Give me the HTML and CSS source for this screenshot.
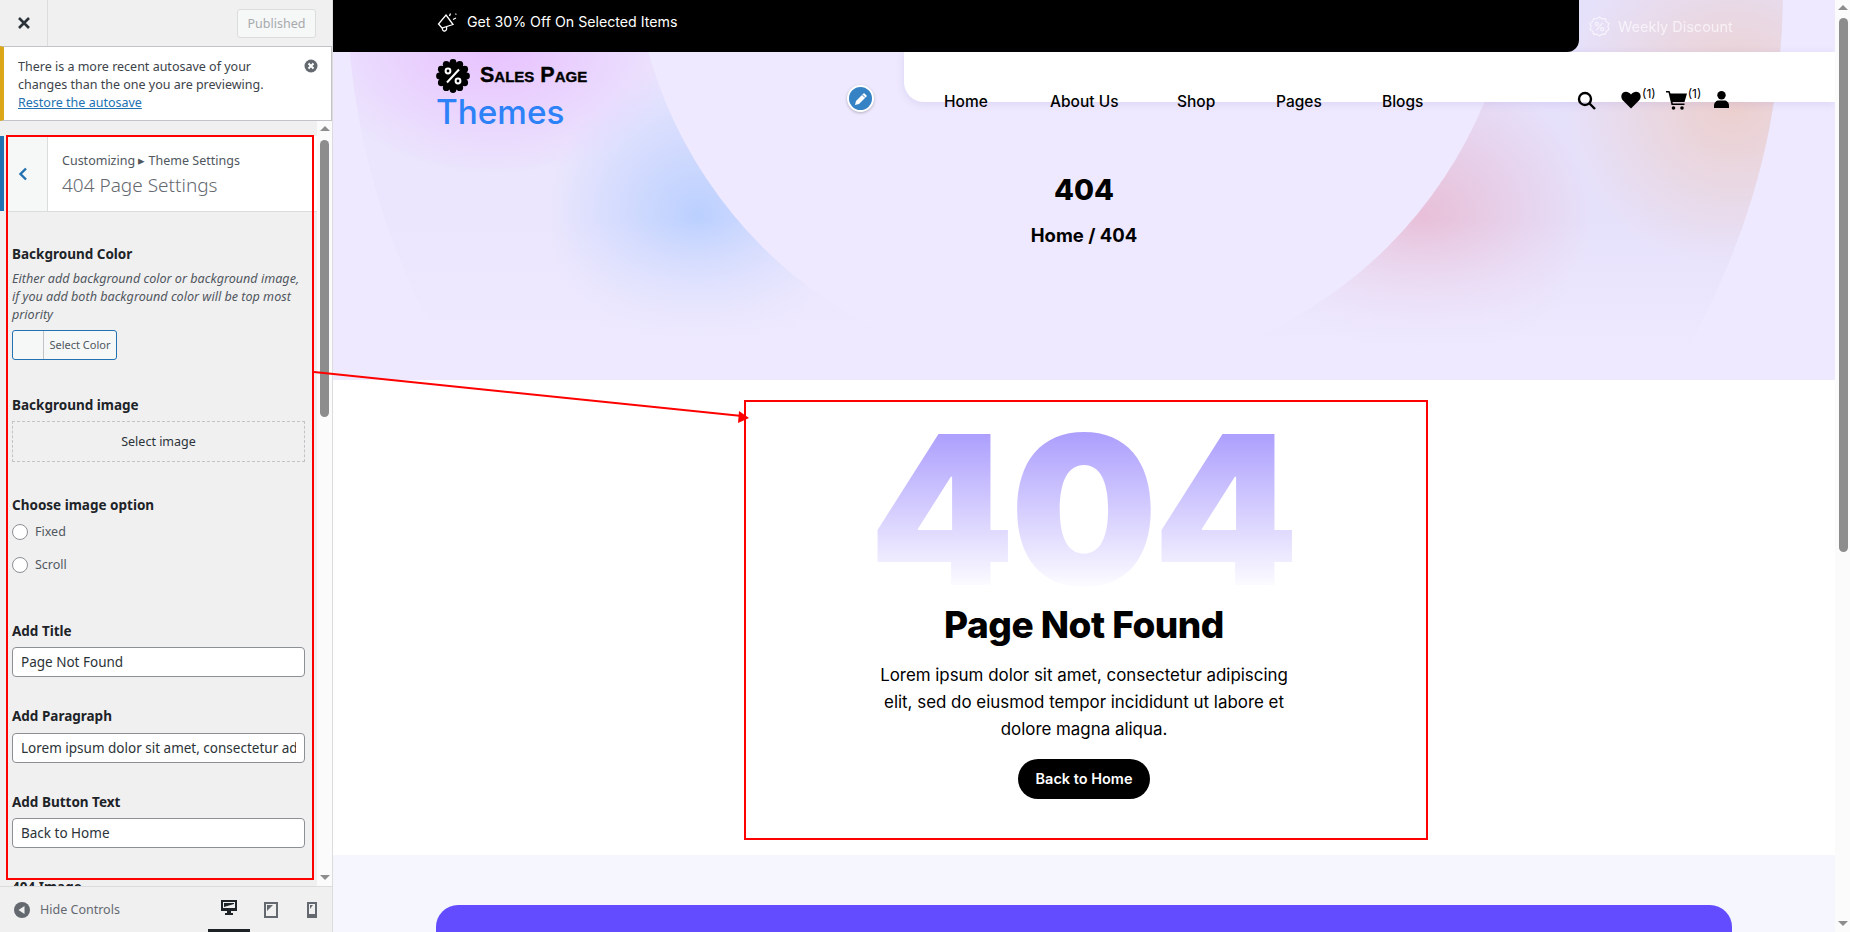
FILE: index.html
```html
<!DOCTYPE html>
<html lang="en">
<head>
    <meta charset="UTF-8">
    <title>Customize: 404 Page Settings</title>
    <link rel="stylesheet" href="styles.css">
</head>
<body>
    <aside class="sidebar">
        <div class="top-actions">
            <a class="close-btn" href="#">
                <svg width="14" height="14" viewBox="0 0 14 14"><path d="M2 2l10 10M12 2L2 12" stroke="#2c3338" stroke-width="2.6"/></svg>
            </a>
            <button class="publish-btn">Published</button>
        </div>
        <div class="notice">
            <p>There is a more recent autosave of your changes than the one you are previewing.</p>
            <a href="#">Restore the autosave</a>
            <svg class="notice-dismiss" width="14" height="14" viewBox="0 0 14 14"><circle cx="7" cy="7" r="6.5" fill="#646970"/><path d="M4.5 4.5l5 5M9.5 4.5l-5 5" stroke="#fff" stroke-width="2"/></svg>
        </div>
        <div class="panel-wrap">
            <div class="panel">
                <div class="section-head">
                    <span class="active-bar"></span>
                    <a class="back-btn" href="#">
                        <svg width="10" height="14" viewBox="0 0 10 14"><path d="M8 1.5L2.5 7 8 12.5" fill="none" stroke="#2271b1" stroke-width="2.4"/></svg>
                    </a>
                    <div class="section-title">
                        <span class="crumb">Customizing ▸ Theme Settings</span>
                        <h2>404 Page Settings</h2>
                    </div>
                </div>
                <div class="controls">
                    <div class="control control-color">
                        <label>Background Color</label>
                        <p class="desc">Either add background color or background image, if you add both background color will be top most priority</p>
                        <button class="color-btn"><span class="swatch"></span><span class="color-label">Select Color</span></button>
                    </div>
                    <div class="control control-image">
                        <label>Background image</label>
                        <button class="image-btn">Select image</button>
                    </div>
                    <div class="control control-radio">
                        <label>Choose image option</label>
                        <div class="radio-row"><span class="radio"></span>Fixed</div>
                        <div class="radio-row"><span class="radio"></span>Scroll</div>
                    </div>
                    <div class="control">
                        <label>Add Title</label>
                        <input type="text" value="Page Not Found">
                    </div>
                    <div class="control control-paragraph">
                        <label>Add Paragraph</label>
                        <input type="text" value="Lorem ipsum dolor sit amet, consectetur adipiscing elit">
                    </div>
                    <div class="control">
                        <label>Add Button Text</label>
                        <input type="text" value="Back to Home">
                    </div>
                    <div class="control">
                        <label>404 Image</label>
                    </div>
                </div>
            </div>
            <div class="scrollbar scrollbar-panel">
                <span class="arrow-up"></span>
                <span class="thumb thumb-panel"></span>
                <span class="arrow-down"></span>
            </div>
        </div>
        <div class="bottom-bar">
            <svg width="16" height="16" viewBox="0 0 16 16"><circle cx="8" cy="8" r="8" fill="#646970"/><path d="M10.5 4v8L4.5 8z" fill="#f0f0f1"/></svg>
            <span class="hide-label">Hide Controls</span>
            <div class="devices">
                <span class="device device-active">
                    <svg width="16" height="16" viewBox="0 0 16 16"><path d="M0 0h16v11H10v2h2v2H4v-2h2v-2H0z" fill="#1d2327"/><path d="M2 2h12v6L2 8z" fill="#f0f0f1"/><path d="M3 3h10v1L3 7z" fill="#1d2327"/></svg>
                </span>
                <span class="device">
                    <svg width="14" height="16" viewBox="0 0 14 16"><path d="M0 0h14v16H0z" fill="#646970"/><path d="M2 2h10v12H2z" fill="#f0f0f1"/><path d="M3 3h6L3 9z" fill="#646970"/></svg>
                </span>
                <span class="device">
                    <svg width="10" height="16" viewBox="0 0 10 16"><path d="M0 0h10v16H0z" fill="#646970"/><path d="M2 2h6v10H2z" fill="#f0f0f1"/><path d="M3 3h3L3 7z" fill="#646970"/></svg>
                </span>
            </div>
        </div>
    </aside>

    <div class="preview">
        <div class="page">
            <section class="hero">
                <div class="hero-ring"></div>
                <div class="hero-hole"></div>
                <div class="hero-inner">
                    <div class="top-strip">
                        <div class="offer-bar">
                            <svg width="21" height="20" viewBox="0 0 21 20" fill="none" stroke="#fff" stroke-width="1.3"><path d="M9 3l7 9.500-11 3.500-3.500-4z"/><path d="M5.500 16c-.5 2 .8 3.300 2.300 3 1.500-.3 2.200-1.500 1.700-4"/><path d="M12.500 4l1-2.500M16 7.500l3-1.500M18.500 2.500l.8-.8"/></svg>
                            <span>Get 30% Off On Selected Items</span>
                        </div>
                        <div class="weekly">
                            <svg width="21" height="21" viewBox="0 0 20 20" fill="none" stroke="#fff" stroke-width="1.1"><path d="M10 1l2.500 1.800 3-.2 1 2.800 2.500 1.800-1 2.800 1 2.800-2.500 1.800-1 2.800-3-.2L10 19l-2.500-1.800-3 .2-1-2.800L1 12.600l1-2.800-1-2.800 2.500-1.800 1-2.800 3 .2z"/><path d="M13 6.500l-6 7"/><circle cx="7.500" cy="7.500" r="1.500"/><circle cx="12.500" cy="12.500" r="1.500"/></svg>
                            <span>Weekly Discount</span>
                        </div>
                    </div>
                    <header class="site-header">
                        <div class="logo">
                            <div class="logo-top">
                                <svg width="34" height="34" viewBox="0 0 34 34">
                                    <g fill="#000">
                                        <circle cx="17" cy="17" r="14"/>
                                        <circle cx="30.500" cy="17" r="3.400"/><circle cx="28.700" cy="23.750" r="3.400"/><circle cx="23.750" cy="28.700" r="3.400"/>
                                        <circle cx="17" cy="30.500" r="3.400"/><circle cx="10.250" cy="28.700" r="3.400"/><circle cx="5.300" cy="23.750" r="3.400"/>
                                        <circle cx="3.500" cy="17" r="3.400"/><circle cx="5.300" cy="10.250" r="3.400"/><circle cx="10.250" cy="5.300" r="3.400"/>
                                        <circle cx="17" cy="3.500" r="3.400"/><circle cx="23.750" cy="5.300" r="3.400"/><circle cx="28.700" cy="10.250" r="3.400"/>
                                    </g>
                                    <g fill="none" stroke="#fff" stroke-width="2">
                                        <path d="M23 10.500L11 23.500"/>
                                        <circle cx="12" cy="12" r="2.400"/>
                                        <circle cx="22" cy="22" r="2.400"/>
                                    </g>
                                </svg>
                                <span class="logo-name">Sales Page</span>
                            </div>
                            <div class="logo-sub">Themes</div>
                        </div>
                        <nav class="main-nav">
                            <div class="nav-links">
                                <a href="#">Home</a>
                                <a href="#">About Us</a>
                                <a href="#">Shop</a>
                                <a href="#">Pages</a>
                                <a href="#">Blogs</a>
                            </div>
                            <div class="nav-icons">
                                <svg class="icon-search" width="19" height="19" viewBox="0 0 19 19" fill="none" stroke="#000" stroke-width="2.400"><circle cx="8" cy="8" r="6"/><path d="M12.500 12.500l5.500 5.500"/></svg>
                                <span class="icon-count icon-heart">
                                    <svg width="20" height="18" viewBox="0 0 20 18"><path d="M10 17.500L2 9.500C-.5 7 0 3.200 2.200 1.600 4.500 0 7.500.5 10 3.500 12.500.5 15.500 0 17.800 1.600 20 3.200 20.500 7 18 9.500z" fill="#000"/></svg>
                                    <sup>(1)</sup>
                                </span>
                                <span class="icon-count icon-cart">
                                    <svg width="21" height="19" viewBox="0 0 21 19"><path d="M0 0h3.500l1 2.500H21l-2.500 8.500H6.500l.4 1.500H18.500v1.500H5.500L2.500 1.500H0z" fill="#000"/><circle cx="7.500" cy="17" r="1.800" fill="#000"/><circle cx="16" cy="17" r="1.800" fill="#000"/></svg>
                                    <sup>(1)</sup>
                                </span>
                                <svg class="icon-user" width="15" height="17" viewBox="0 0 15 17"><circle cx="7.500" cy="4.200" r="4.200" fill="#000"/><path d="M0 17v-2.500C0 11.500 2.500 9.500 4.500 9.500h6c2 0 4.500 2 4.500 5V17z" fill="#000"/></svg>
                            </div>
                        </nav>
                        <span class="edit-shortcut">
                            <svg width="14" height="14" viewBox="0 0 14 14"><path d="M10 1l3 3-8 8-4 1 1-4z" fill="#fff"/><path d="M8.500 3l2.500 2.500" stroke="#3582c4" stroke-width="1"/></svg>
                        </span>
                    </header>
                    <div class="hero-title">
                        <h1>404</h1>
                        <p>Home / 404</p>
                    </div>
                </div>
            </section>

            <main class="not-found">
                <div class="big-404">404</div>
                <h2>Page Not Found</h2>
                <p>Lorem ipsum dolor sit amet, consectetur adipiscing elit, sed do eiusmod tempor incididunt ut labore et dolore magna aliqua.</p>
                <a class="home-btn" href="#">Back to Home</a>
            </main>

            <section class="newsletter">
                <div class="newsletter-card"></div>
            </section>
        </div>
        <div class="scrollbar scrollbar-page">
            <span class="arrow-up"></span>
            <span class="thumb thumb-page"></span>
            <span class="arrow-down"></span>
        </div>
    </div>

    <!-- red annotation drawn over the screenshot -->
    <svg class="annotations" width="1850" height="932" viewBox="0 0 1850 932">
        <g fill="none" stroke="#f00" stroke-width="2">
            <rect x="7" y="136" width="306" height="743"/>
            <rect x="745" y="401" width="682" height="438"/>
            <path d="M314 372L742 416"/>
        </g>
        <path d="M749 418L739 411 738 423z" fill="#f00"/>
    </svg>
</body>
</html>
```

FILE: styles.css
```css
* {
    box-sizing: border-box;
}
html, body {
    height: 100%;
}
body {
    margin: 0;
    display: flex;
    height: 932px;
    overflow: hidden;
    font-family: "Inter", "Liberation Sans", sans-serif;
    background-color: #fff;
    color: #000;
}
a {
    text-decoration: none;
    color: inherit;
}
h1, h2, p {
    margin: 0;
}

/* customizer sidebar */
.sidebar {
    width: 333px;
    flex-shrink: 0;
    display: flex;
    flex-direction: column;
    background-color: #f0f0f1;
    border-right: 1px solid #dcdcde;
    font-family: "Noto Sans", "Liberation Sans", sans-serif;
    color: #1d2327;
}
.top-actions {
    height: 46px;
    flex-shrink: 0;
    display: flex;
    align-items: center;
    justify-content: space-between;
    padding-right: 16px;
}
.close-btn {
    width: 48px;
    height: 46px;
    display: flex;
    align-items: center;
    justify-content: center;
    border-right: 1px solid #dcdcde;
}
.publish-btn {
    width: 79px;
    height: 29px;
    padding: 0;
    font-family: inherit;
    font-size: 12.500px;
    color: #a7aaad;
    background-color: #f6f7f7;
    border: 1px solid #dcdcde;
    border-radius: 3px;
}
.notice {
    position: relative;
    height: 75px;
    flex-shrink: 0;
    padding: 11px 30px 0 14px;
    background-color: #fff;
    border: 1px solid #c3c4c7;
    border-left: 4px solid #dba617;
    font-size: 12.500px;
    line-height: 18px;
    color: #3c434a;
}
.notice a {
    color: #2271b1;
    text-decoration: underline;
}
.notice-dismiss {
    position: absolute;
    top: 12px;
    right: 13px;
}
.panel-wrap {
    flex: 1;
    min-height: 0;
    display: flex;
}
.panel {
    flex: 1;
    min-width: 0;
    overflow: hidden;
    padding-top: 15px;
}
.section-head {
    position: relative;
    height: 76px;
    display: flex;
    margin-left: 8px;
    background-color: #fff;
    border-bottom: 1px solid #dcdcde;
}
.active-bar {
    position: absolute;
    left: -8px;
    top: 0;
    bottom: 0;
    width: 4px;
    background-color: #2271b1;
}
.back-btn {
    width: 40px;
    display: flex;
    align-items: center;
    justify-content: center;
    padding-right: 9px;
    background-color: #f6f7f7;
    border-right: 1px solid #dcdcde;
}
.section-title {
    padding: 16px 0 0 14px;
}
.crumb {
    display: block;
    font-size: 12.500px;
    line-height: 18px;
    color: #50575e;
}
.section-title h2 {
    margin-top: 1px;
    font-size: 19px;
    font-weight: 300;
    line-height: 28px;
    color: #646970;
}
.controls {
    padding: 33px 12px 0;
}
.control {
    margin-bottom: 30px;
}
.control-color {
    margin-bottom: 36px;
}
.control-image {
    margin-bottom: 34px;
}
.control-radio {
    margin-bottom: 41px;
}
.control label {
    display: block;
    margin-bottom: 7px;
    font-size: 13.500px;
    font-weight: 700;
    line-height: 18px;
}
.control-paragraph label {
    margin-bottom: 8px;
}
.desc {
    margin-bottom: 6px;
    font-size: 12.600px;
    font-style: italic;
    line-height: 18px;
    color: #50575e;
}
.color-btn {
    display: flex;
    width: 105px;
    height: 30px;
    padding: 0;
    font-family: inherit;
    background-color: #f6f7f7;
    border: 1px solid #2271b1;
    border-radius: 3px;
}
.swatch {
    width: 31px;
    height: 100%;
    border-right: 1px solid #c3c4c7;
}
.color-label {
    flex: 1;
    font-size: 11px;
    line-height: 28px;
    color: #50575e;
}
.image-btn {
    display: block;
    width: 100%;
    height: 41px;
    padding: 0;
    font-family: inherit;
    font-size: 12.500px;
    color: #2c3338;
    background: none;
    border: 1px dashed #c3c4c7;
}
.radio-row {
    display: flex;
    align-items: center;
    gap: 7px;
    height: 33px;
    font-size: 12.500px;
    color: #50575e;
}
.radio-row:first-of-type {
    margin-top: -6px;
}
.radio {
    width: 16px;
    height: 16px;
    background-color: #fff;
    border: 1px solid #8c8f94;
    border-radius: 50%;
}
.control input {
    display: block;
    width: 100%;
    height: 30px;
    padding: 0 8px;
    font-family: inherit;
    font-size: 13.500px;
    color: #2c3338;
    background-color: #fff;
    border: 1px solid #8c8f94;
    border-radius: 4px;
}
.bottom-bar {
    position: relative;
    z-index: 1;
    height: 46px;
    flex-shrink: 0;
    display: flex;
    align-items: center;
    padding-left: 14px;
    background-color: #f0f0f1;
    border-top: 1px solid #dcdcde;
}
.hide-label {
    margin-left: 10px;
    font-size: 12.500px;
    color: #646970;
}
.devices {
    margin-left: auto;
    display: flex;
    align-self: stretch;
}
.device {
    width: 41px;
    display: flex;
    align-items: center;
    justify-content: center;
}
.device-active {
    width: 42px;
    border-bottom: 3px solid #1d2327;
}

/* custom scrollbars */
.scrollbar {
    position: relative;
    width: 15px;
    flex-shrink: 0;
    background-color: #fbfbfb;
}
.thumb {
    position: absolute;
    left: 3px;
    width: 9px;
    background-color: #8d8d8d;
    border-radius: 5px;
}
.thumb-panel {
    top: 19px;
    height: 277px;
}
.thumb-page {
    left: 4px;
    top: 18px;
    height: 534px;
}
.arrow-up, .arrow-down {
    position: absolute;
    left: 3px;
    width: 0;
    height: 0;
    border-left: 5px solid transparent;
    border-right: 5px solid transparent;
}
.arrow-up {
    top: 5px;
    border-bottom: 5px solid #8d8d8d;
}
.arrow-down {
    bottom: 6px;
    border-top: 5px solid #8d8d8d;
}

/* site preview */
.preview {
    flex: 1;
    min-width: 0;
    display: flex;
    height: 932px;
}
.page {
    flex: 1;
    min-width: 0;
    overflow: hidden;
}
.hero {
    position: relative;
    height: 380px;
    background-color: #eee9fe;
    overflow: hidden;
}
.hero-ring, .hero-hole {
    position: absolute;
    inset: 0;
}
.hero-ring {
    clip-path: circle(718px at 732px -11px);
    background:
        linear-gradient(180deg, rgba(238,233,254,0) 58%, #eee9fe 92%),
        radial-gradient(ellipse 190px 140px at 161px 38px, #e8bfff 0%, rgba(232,191,255,0) 100%),
        radial-gradient(ellipse 150px 150px at 365px 215px, #bbd0ff 0%, rgba(187,208,255,0) 100%),
        radial-gradient(ellipse 170px 150px at 1090px 215px, #e8bfd8 0%, rgba(232,191,216,0) 100%),
        radial-gradient(ellipse 170px 170px at 1400px 100px, #eccfcc 0%, rgba(236,207,204,0) 100%),
        linear-gradient(90deg, #ebe6fd 0%, #ebe6fd 45%, #e6e1fb 75%);
}
.hero-hole {
    clip-path: circle(443px at 742px -67px);
    background-color: #eee9fe;
}
.hero-inner {
    position: relative;
}
.top-strip {
    height: 52px;
    display: flex;
}
.offer-bar {
    width: 1246px;
    height: 52px;
    display: flex;
    align-items: center;
    gap: 9px;
    padding: 0 0 9px 104px;
    background-color: #000;
    border-bottom-right-radius: 12px;
    color: #fff;
    font-size: 14.200px;
}
.weekly {
    display: flex;
    align-items: center;
    gap: 8px;
    padding-left: 10px;
    font-size: 14.500px;
    color: #fff;
    opacity: .65;
}
.site-header {
    position: relative;
    height: 50px;
    display: flex;
    justify-content: flex-end;
}
.logo {
    position: absolute;
    left: 103px;
    top: 7px;
}
.logo-top {
    display: flex;
    align-items: center;
    gap: 10px;
    height: 34px;
}
.logo-name {
    font-family: "Liberation Sans", sans-serif;
    font-size: 21.500px;
    font-weight: 700;
    font-variant: small-caps;
    line-height: 1;
    -webkit-text-stroke: .4px #000;
}
.logo-sub {
    font-size: 33.300px;
    font-weight: 500;
    line-height: 38px;
    color: #2d82f8;
}
.main-nav {
    width: 931px;
    height: 50px;
    display: flex;
    padding-left: 40px;
    background-color: #fff;
    border-bottom-left-radius: 20px;
    box-shadow: 0 2px 8px rgba(90,70,180,.12);
}
.nav-links {
    display: grid;
    grid-template-columns: 106px 127px 99px 106px 60px;
    height: 61px;
    padding-top: 39px;
    font-size: 15.500px;
    font-weight: 500;
    line-height: 22px;
}
.nav-icons {
    display: flex;
    align-items: flex-start;
    padding-top: 39px;
    margin-left: 135px;
}
.icon-search {
    margin-right: 25px;
}
.icon-count {
    display: flex;
    align-items: flex-start;
    margin-right: 10px;
}
.icon-count sup {
    margin: -4px 0 0 1px;
    font-size: 12px;
    line-height: 14px;
    vertical-align: baseline;
}
.icon-user {
    margin-left: 3px;
}
.edit-shortcut {
    position: absolute;
    left: 514px;
    top: 33px;
    width: 27px;
    height: 27px;
    display: flex;
    align-items: center;
    justify-content: center;
    background-color: #3582c4;
    border: 2px solid #fff;
    border-radius: 50%;
    box-shadow: 0 1px 3px rgba(0,0,0,.25);
}
.hero-title {
    padding-top: 69px;
    text-align: center;
}
.hero-title h1 {
    font-size: 29px;
    font-weight: 800;
    line-height: 38px;
}
.hero-title p {
    margin-top: 11px;
    font-size: 18.500px;
    font-weight: 700;
    line-height: 30px;
}

/* 404 block */
.not-found {
    height: 475px;
    display: flex;
    flex-direction: column;
    align-items: center;
    padding-top: 47px;
    text-align: center;
}
.big-404 {
    height: 165px;
    margin-left: -5px;
    font-size: 208px;
    font-weight: 900;
    line-height: 165px;
    letter-spacing: -5px;
    color: transparent;
    background: linear-gradient(180deg, #a99bfd 0%, #fff 100%);
    -webkit-background-clip: text;
    background-clip: text;
}
.not-found h2 {
    margin-top: 8px;
    font-size: 37px;
    font-weight: 800;
    line-height: 50px;
    letter-spacing: -.5px;
}
.not-found p {
    width: 430px;
    margin-top: 12px;
    font-size: 16.900px;
    line-height: 27px;
}
.home-btn {
    width: 132px;
    height: 40px;
    margin-top: 16px;
    background-color: #000;
    border-radius: 20px;
    color: #fff;
    font-size: 14.500px;
    font-weight: 600;
    line-height: 40px;
}
.newsletter {
    height: 77px;
    padding: 50px 0 0 103px;
    background-color: #f6f6ff;
    overflow: hidden;
}
.newsletter-card {
    width: 1296px;
    height: 120px;
    background-color: #634cff;
    border-radius: 22px;
}

.annotations {
    position: absolute;
    left: 0;
    top: 0;
    pointer-events: none;
}
```
